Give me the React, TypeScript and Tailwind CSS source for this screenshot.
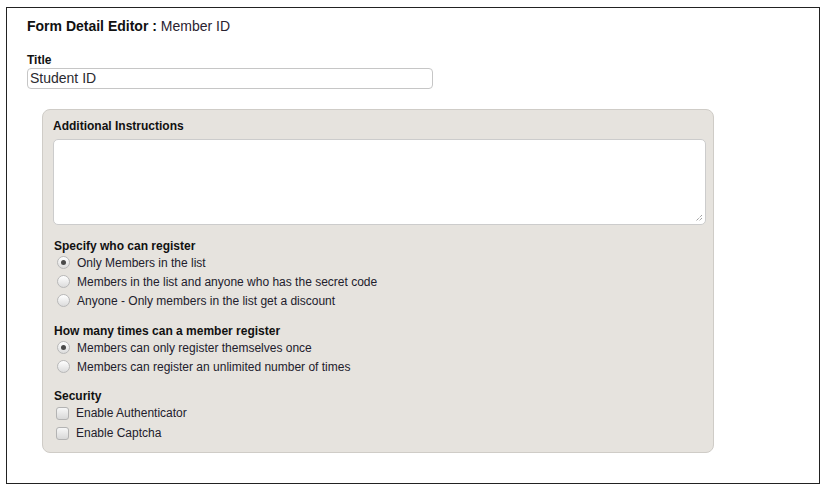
import React from "react";

type Opt = { label: string; checked?: boolean };

const whoOptions: Opt[] = [
  { label: "Only Members in the list", checked: true },
  { label: "Members in the list and anyone who has the secret code" },
  { label: "Anyone - Only members in the list get a discount" },
];

const timesOptions: Opt[] = [
  { label: "Members can only register themselves once", checked: true },
  { label: "Members can register an unlimited number of times" },
];

const securityOptions: Opt[] = [{ label: "Enable Authenticator" }, { label: "Enable Captcha" }];

function Radio({ checked }: { checked?: boolean }) {
  return (
    <span className="w-[13px] h-[13px] rounded-full border border-[#b8b8b8] bg-gradient-to-b from-[#ffffff] to-[#dcdcdc] flex items-center justify-center shrink-0">
      {checked && <span className="w-[5px] h-[5px] rounded-full bg-[#4a4a4a]" />}
    </span>
  );
}

function Checkbox() {
  return (
    <span className="w-[13px] h-[13px] rounded-[3px] border border-[#b3b3b3] bg-gradient-to-b from-[#f7f7f7] to-[#d8d8d8] shrink-0" />
  );
}

function Section({ title, className, children }: { title: string; className?: string; children: React.ReactNode }) {
  return (
    <div className={className}>
      <div className="text-[12px] leading-[14px] font-bold text-[#111] pl-px">{title}</div>
      <div>{children}</div>
    </div>
  );
}

export default function App() {
  return (
    <div className="w-[827px] h-[489px] bg-white pt-[7px] pl-[6px] font-['Liberation_Sans',Arial,sans-serif] text-[#1c1c24]">
      <div className="w-[814px] h-[477px] border border-[#222] pl-[20px] pt-[10px]">
        {/* Header */}
        <div className="text-[14px] leading-[16px] text-[#111]">
          <span className="font-bold">Form Detail Editor :</span> <span className="text-[#2a2230]">Member ID</span>
        </div>

        {/* Title field */}
        <div className="mt-[19px] text-[12px] leading-[14px] font-bold text-[#111]">Title</div>
        <div className="mt-px w-[406px] h-[21px] border border-[#c6c6c6] rounded-[4px] bg-white px-[2px] text-[14px] leading-[19px] text-[#2a2a30]">
          Student ID
        </div>

        {/* Options panel */}
        <div className="mt-[20px] ml-[15px] w-[672px] h-[344px] bg-[#e6e3de] border border-[#cfccc7] rounded-[8px] pl-[10px] pr-[7px] pt-[9px]">
          <div className="text-[12px] leading-[14px] font-bold text-[#111]">Additional Instructions</div>
          <div className="relative mt-[6px] w-[653px] h-[86px] bg-white border border-[#cccccc] rounded-[5px]">
            <svg className="absolute right-[2px] bottom-[2px]" width="8" height="8" viewBox="0 0 8 8">
              <path d="M7 1 L1 7 M7 4 L4 7" stroke="#777" strokeWidth="1" strokeDasharray="1 1" />
            </svg>
          </div>

          <Section title="Specify who can register" className="mt-[14px]">
            {whoOptions.map((o) => (
              <div key={o.label} className="h-[19px] flex items-center gap-[7px] pl-[4px] text-[12px] text-[#22202c]">
                <Radio checked={o.checked} />
                <span>{o.label}</span>
              </div>
            ))}
          </Section>

          <Section title="How many times can a member register" className="mt-[14px]">
            {timesOptions.map((o) => (
              <div key={o.label} className="h-[19px] flex items-center gap-[7px] pl-[4px] text-[12px] text-[#22202c]">
                <Radio checked={o.checked} />
                <span>{o.label}</span>
              </div>
            ))}
          </Section>

          <Section title="Security" className="mt-[13px]">
            {securityOptions.map((o) => (
              <div key={o.label} className="h-[20px] flex items-center gap-[7px] pl-[3px] text-[12px] text-[#22202c]">
                <Checkbox />
                <span>{o.label}</span>
              </div>
            ))}
          </Section>
        </div>
      </div>
    </div>
  );
}
